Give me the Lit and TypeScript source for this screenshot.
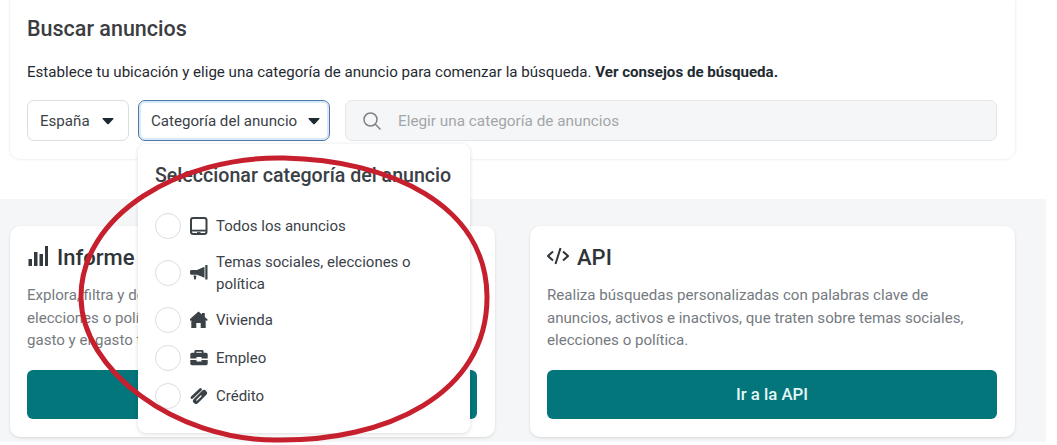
import { LitElement, html, css, svg } from "lit";
import { customElement } from "lit/decorators.js";

const caret = html`<svg class="caret" viewBox="0 0 12 8"><path d="M1.2 1h9.6c.6 0 .9.6.6 1L6.800 6.900c-.4.5-1.200.5-1.600 0L.6 2c-.3-.4 0-1 .6-1z" fill="#1c2b33"/></svg>`;

const icons = {
  tablet: svg`<rect x="1" y="1" width="15.500" height="16" rx="2.200" fill="none" stroke="#3a4248" stroke-width="2"/><path d="M1.500 13.600h14.500" stroke="#3a4248" stroke-width="1.800"/><path d="M7 15.400h3.500" stroke="#3a4248" stroke-width="1"/>`,
  mega: svg`<path d="M0 7.500c0-1 .7-1.600 1.600-1.600H7L14.500 2.800v11L7 10.800H1.600C.7 10.800 0 10 0 9z" fill="#3a4248"/><path d="M15.300 1h2.200v14.500h-2.200z" fill="#3a4248"/><path d="M3.500 11.500h3l-.8 4H4.200z" fill="#3a4248"/>`,
  home: svg`<path d="M8.500.5L12 3.600V2h2.800v4l3 2.700-1 1.300-1.100-.9V17h-5v-5H6.300v5h-5V9.100l-1.100.9-1-1.300z" fill="#3a4248"/>`,
  job: svg`<path d="M6 1h6c1 0 1.600.6 1.600 1.600V4h-1.800V2.800H6.200V4H4.400V2.600C4.400 1.600 5 1 6 1z" fill="#3a4248"/><path d="M2 3.800h14c1 0 1.700.7 1.700 1.700v4H11.500v-1.500h-5v1.500H.3v-4C.3 4.500 1 3.800 2 3.800zM.3 11h6.200v1.500h5V11h6.200v3.500c0 1-.7 1.700-1.700 1.700H2c-1 0-1.700-.7-1.700-1.700z" fill="#3a4248"/>`,
  credit: svg`<path d="M2 10.500L10.500 2.500" stroke="#3a4248" stroke-width="2.800" stroke-linecap="round"/><path d="M6 14L14 6" stroke="#3a4248" stroke-width="6" stroke-linecap="round"/><path d="M6.800 13.200L11 9" stroke="#fff" stroke-width="1.200" stroke-linecap="round"/>`,
};

const rows = [
  { label: "Todos los anuncios", icon: icons.tablet },
  { label: "Temas sociales, elecciones o política", icon: icons.mega },
  { label: "Vivienda", icon: icons.home },
  { label: "Empleo", icon: icons.job },
  { label: "Crédito", icon: icons.credit },
];

@customElement("app-root")
export class AppRoot extends LitElement {
  static styles = css`
    :host {
      display: block;
      position: relative;
      width: 1057px;
      height: 445px;
      overflow: hidden;
      background: #fff;
      font-family: Roboto, "Liberation Sans", sans-serif;
      color: #1c2b33;
    }
    .top { height: 209px; width: 1046px; margin-top: -10px; box-sizing: border-box; padding: 0 31px 0 10px; }
    .search-card {
      height: 169px;
      box-sizing: border-box;
      padding: 26px 18px 0 17px;
      background: #fff;
      border-radius: 10px;
      box-shadow: 0 0 3px rgba(0,0,0,.12);
    }
    h1 { margin: 0; font-size: 21.500px; line-height: 26px; font-weight: 500; color: #3b3d42; }
    .intro { margin: 19px 0 0; font-size: 15.100px; line-height: 22px; color: #1f2a31; white-space: nowrap; }
    .intro b { font-weight: 700; }
    .controls { display: flex; margin-top: 17px; height: 41px; }
    .sel {
      display: flex; align-items: center; box-sizing: border-box;
      border: 1px solid #dadde1; border-radius: 7px; font-size: 15.100px;
      padding: 0 14px 0 12px; background: #fff; color: #3a4248;
    }
    .sel.country { width: 102px; justify-content: space-between; }
    .sel.cat {
      width: 192px; margin-left: 9px; justify-content: space-between; padding-right: 9px;
      border-color: #4a78a8; box-shadow: 0 0 0 2px #d9e9f7 inset;
    }
    .caret { width: 12px; height: 8px; }
    .input {
      flex: 1; margin-left: 15px; display: flex; align-items: center;
      background: #f5f6f7; border: 1px solid #e4e6e8; border-radius: 7px;
      padding-left: 16px; font-size: 15.300px; color: #a3a6aa;
    }
    .input svg { width: 20px; height: 20px; margin-right: 16px; }
    .lower {
      width: 1046px; height: 243px; box-sizing: border-box; background: #f5f6f7;
      padding: 27px 31px 5px 10px; display: flex; gap: 35px;
    }
    .card {
      flex: 1; background: #fff; border-radius: 10px; padding: 17px 18px 0 17px;
      box-sizing: border-box; box-shadow: 0 1px 3px rgba(0,0,0,.12);
      min-width: 0; overflow: hidden;
    }
    .head { display: flex; align-items: center; gap: 8px; height: 28px; }
    .head span { font-size: 22px; font-weight: 500; color: #2f3438; white-space: nowrap; }
    .head svg { width: 22px; height: 22px; flex: none; margin-top: -2px; }
    .card p { margin: 13px 0 0; font-size: 15.100px; line-height: 22.500px; color: #757a80; white-space: nowrap; }
    .btn {
      margin-top: 18px; height: 49px; border-radius: 6px; background: #02767a;
      color: #e6f7f7; display: flex; align-items: center; justify-content: center;
      font-size: 16.800px; font-weight: 500;
    }
    .menu {
      position: absolute; left: 138px; top: 144px; width: 332px; height: 289px;
      box-sizing: border-box; padding: 19px 17px 0 17px; background: #fff;
      border-radius: 8px; box-shadow: 0 1px 4px rgba(0,0,0,.14);
    }
    .menu h2 { margin: 0 0 18px; font-size: 19.600px; line-height: 26px; font-weight: 500; color: #3a4045; white-space: nowrap; }
    .row { display: flex; align-items: center; min-height: 38px; padding: 6px 0; box-sizing: border-box; }
    .radio { width: 26px; height: 26px; flex: none; box-sizing: border-box; border: 1px solid #dadde1; border-radius: 50%; margin-right: 9px; }
    .row svg { width: 18px; height: 18px; flex: none; margin-right: 8px; }
    .row span { font-size: 15px; line-height: 22px; color: #3a4248; width: 215px; }
    .ring { position: absolute; left: 0; top: 0; width: 1057px; height: 445px; pointer-events: none; }
  `;

  render() {
    return html`
      <section class="top">
        <div class="search-card">
          <h1>Buscar anuncios</h1>
          <div class="intro">Establece tu ubicación y elige una categoría de anuncio para comenzar la búsqueda. <b>Ver consejos de búsqueda.</b></div>
          <div class="controls">
            <div class="sel country">España ${caret}</div>
            <div class="sel cat">Categoría del anuncio ${caret}</div>
            <div class="input">
              <svg viewBox="0 0 20 20"><circle cx="8.500" cy="8.500" r="6.500" fill="none" stroke="#7b8287" stroke-width="1.500"/><path d="M13.300 13.300L18.500 18.500" stroke="#7b8287" stroke-width="1.500"/></svg>
              Elegir una categoría de anuncios
            </div>
          </div>
        </div>
      </section>
      <section class="lower">
        <div class="card">
          <div class="head">
            <svg viewBox="0 0 22 22"><path d="M1.500 14h3.500v7H1.500zM7 7h3.500v14H7zM12.500 9h3.500v12h-3.500zM18 1h3v20h-3z" fill="#33393e"/></svg>
            <span>Informe de la biblioteca</span>
          </div>
          <p>Explora, filtra y descarga datos de anuncios sobre temas sociales,<br>elecciones o política. Consulta información sobre el gasto total<br>gasto y el gasto total por anunciante.</p>
          <div class="btn">Ir al informe</div>
        </div>
        <div class="card">
          <div class="head">
            <svg viewBox="0 0 22 22"><path d="M6 6.500L1 11 6 15.500M16 6.500L21 11 16 15.500M13.500 3L8.500 19" fill="none" stroke="#2f3438" stroke-width="2"/></svg>
            <span>API</span>
          </div>
          <p>Realiza búsquedas personalizadas con palabras clave de<br>anuncios, activos e inactivos, que traten sobre temas sociales,<br>elecciones o política.</p>
          <div class="btn">Ir a la API</div>
        </div>
      </section>
      <div class="menu">
        <h2>Seleccionar categoría del anuncio</h2>
        ${rows.map(r => html`
          <div class="row">
            <div class="radio"></div>
            <svg viewBox="0 0 18 18">${r.icon}</svg>
            <span>${r.label}</span>
          </div>`)}
      </div>
      <svg class="ring" viewBox="0 0 1057 445">
        <path d="M284 158C180 156 80 215 81 298C82 370 175 440 275 440C385 442 488 395 487 296C486 205 390 160 284 158Z" fill="none" stroke="#c6202e" stroke-width="5"/>
      </svg>
    `;
  }
}
